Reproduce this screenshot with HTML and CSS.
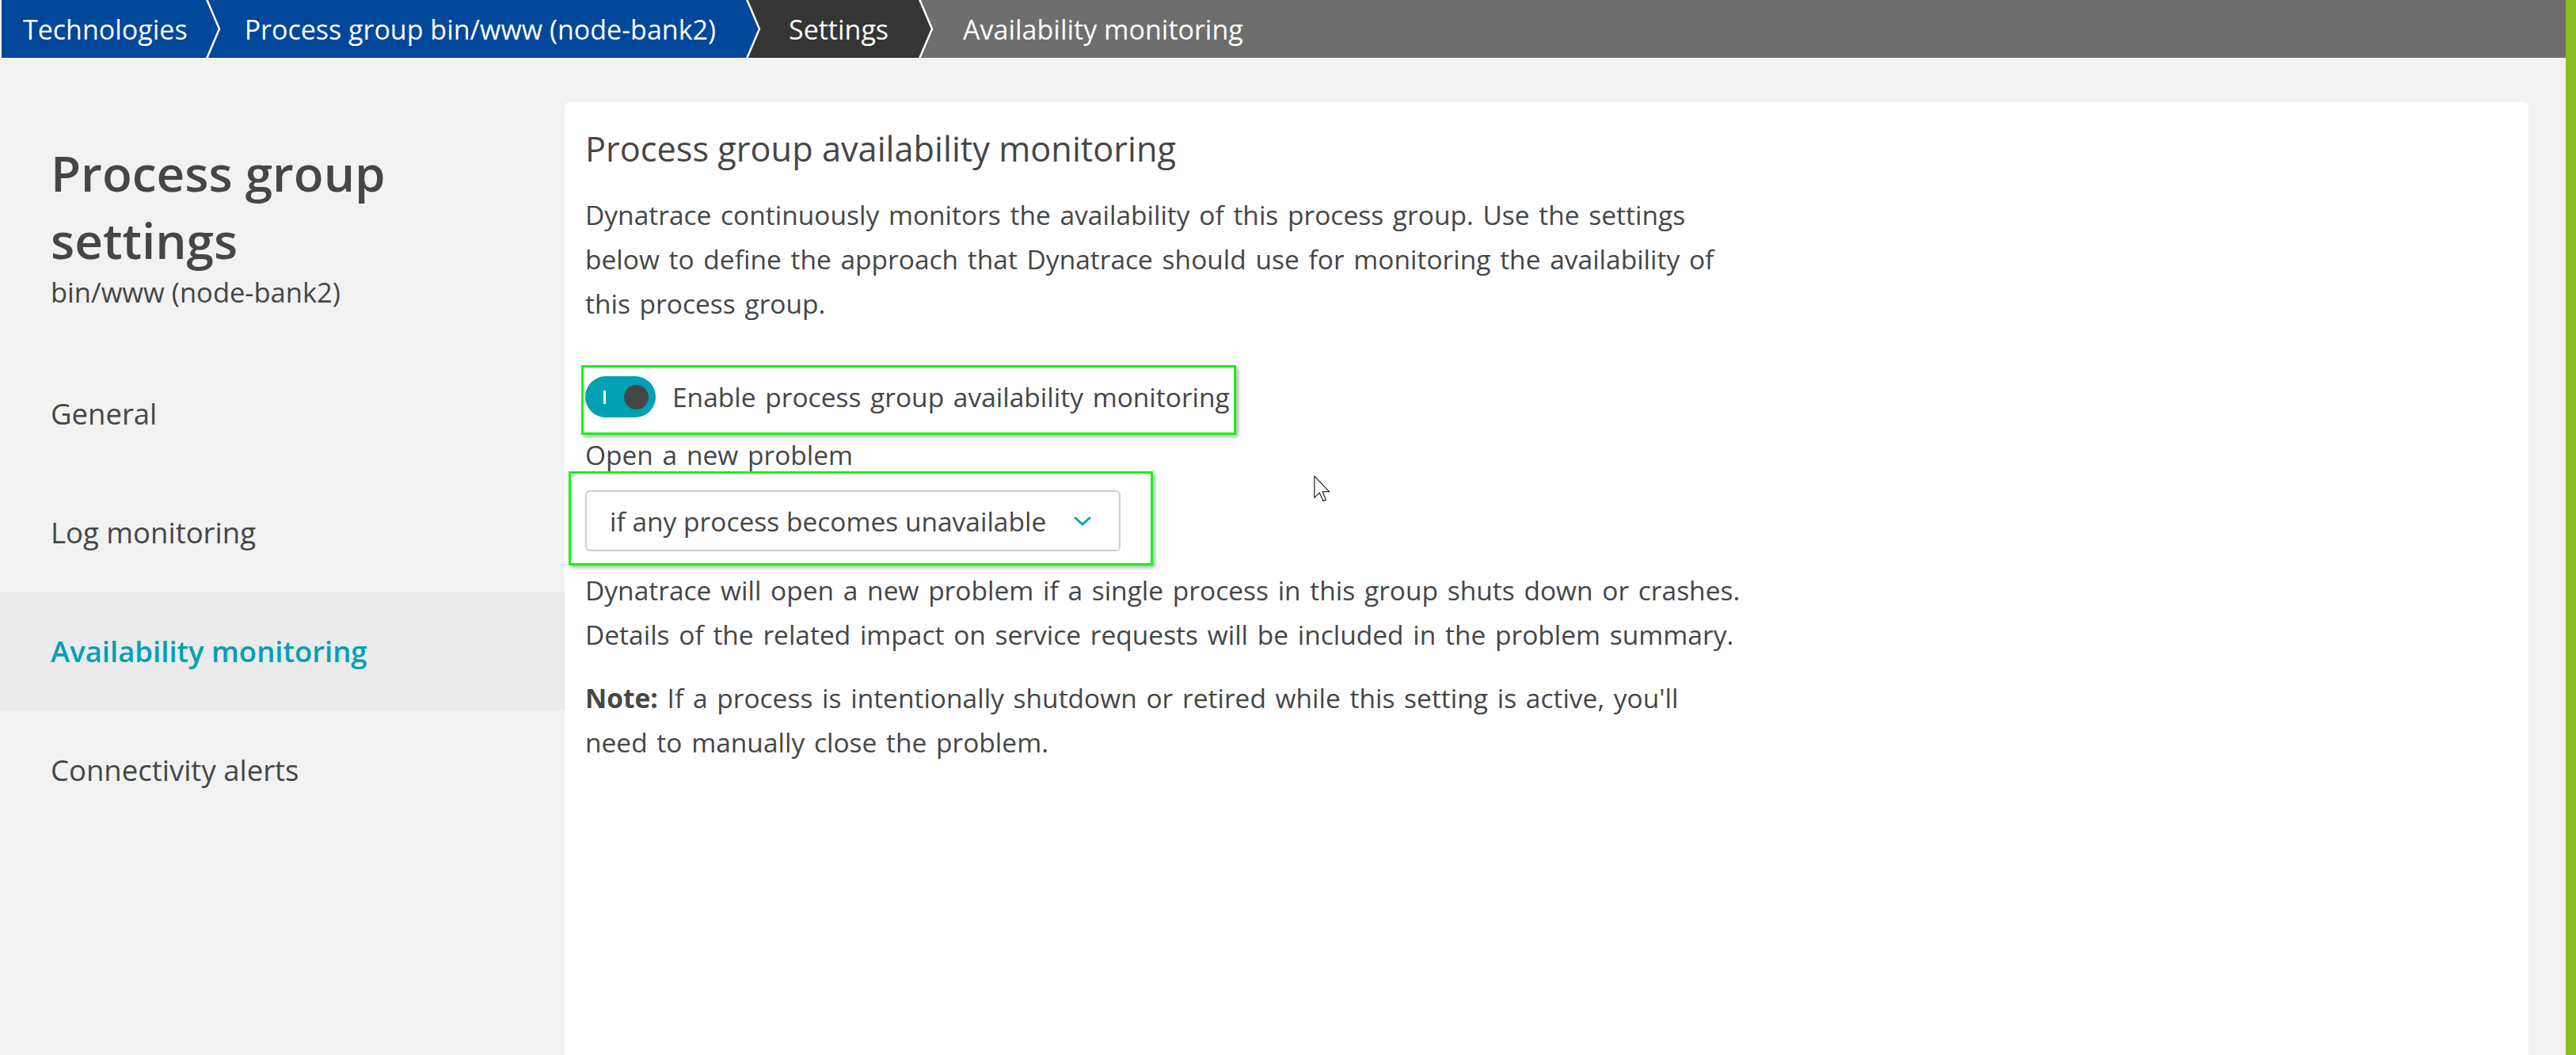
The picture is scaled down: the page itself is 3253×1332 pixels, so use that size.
FILE: index.html
```html
<!DOCTYPE html>
<html lang="en">
<head>
<meta charset="utf-8">
<title>Availability monitoring</title>
<link rel="stylesheet" href="styles.css">
</head>
<body>
<div class="app">
  <div class="main-col">
    <nav class="crumbs">
      <span class="crumb crumb-blue first">Technologies</span>
      <svg class="sep" viewBox="0 0 20 73" preserveAspectRatio="none"><rect x="0" y="0" width="20" height="73" fill="#01489a"/><polyline points="1,-1 17,36.5 1,74" fill="none" stroke="#fff" stroke-width="2.5"/></svg>
      <span class="crumb crumb-blue second">Process group bin/www (node-bank2)</span>
      <svg class="sep" viewBox="0 0 20 73" preserveAspectRatio="none"><rect x="0" y="0" width="20" height="73" fill="#353535"/><polygon points="0,0 1,0 17,36.5 1,73 0,73" fill="#01489a"/><polyline points="1,-1 17,36.5 1,74" fill="none" stroke="#fff" stroke-width="2.5"/></svg>
      <span class="crumb crumb-dark">Settings</span>
      <svg class="sep" viewBox="0 0 20 73" preserveAspectRatio="none"><rect x="0" y="0" width="20" height="73" fill="#6e6e6e"/><polygon points="0,0 1,0 17,36.5 1,73 0,73" fill="#353535"/><polyline points="1,-1 17,36.5 1,74" fill="none" stroke="#fff" stroke-width="2.5"/></svg>
      <span class="crumb crumb-grey last">Availability monitoring</span>
    </nav>
    <div class="body-row">
      <aside class="sidebar">
        <h1 class="side-title">Process group settings</h1>
        <div class="side-sub">bin/www (node-bank2)</div>
        <ul class="side-nav">
          <li class="nav-item">General</li>
          <li class="nav-item">Log monitoring</li>
          <li class="nav-item active">Availability monitoring</li>
          <li class="nav-item">Connectivity alerts</li>
        </ul>
      </aside>
      <div class="content">
        <section class="card">
          <h2 class="card-title">Process group availability monitoring</h2>
          <p class="intro">Dynatrace continuously monitors the availability of this process group. Use the settings<br>below to define the approach that Dynatrace should use for monitoring the availability of<br>this process group.</p>
          <div class="hl hl-toggle">
            <span class="toggle"><span class="toggle-mark"></span><span class="toggle-knob"></span></span>
            <span class="toggle-label">Enable process group availability monitoring</span>
          </div>
          <div class="field-label">Open a new problem</div>
          <div class="hl hl-select">
            <div class="select">
              <span>if any process becomes unavailable</span>
              <svg class="chev" viewBox="0 0 22 12"><polyline points="2,2 11,10 20,2" fill="none" stroke="#00a1b2" stroke-width="3" stroke-linecap="round" stroke-linejoin="round"/></svg>
            </div>
          </div>
          <p class="p2">Dynatrace will open a new problem if a single process in this group shuts down or crashes.<br>Details of the related impact on service requests will be included in the problem summary.</p>
          <p class="note"><b>Note:</b> If a process is intentionally shutdown or retired while this setting is active, you'll<br>need to manually close the problem.</p>
        </section>
      </div>
    </div>
  </div>
  <div class="green-strip"></div>
  <svg class="cursor" viewBox="0 0 12 19"><path d="M0.5,0.5 L0.5,16 L4.2,12.4 L6.8,18.4 L8.8,17.6 L6.3,11.6 L11.2,11.6 Z" fill="#fff" stroke="#000" stroke-width="0.6" stroke-linejoin="miter"/></svg>
</div>
</body>
</html>
```

FILE: styles.css
```css
html, body {
  margin: 0;
  padding: 0;
  height: 100%;
}
body {
  font-family: "Open Sans", "Liberation Sans", sans-serif;
  color: #454646;
  background: #f2f2f2;
  overflow: hidden;
}
.app {
  display: flex;
  height: 100vh;
  position: relative;
}
.main-col {
  flex: 1;
  display: flex;
  flex-direction: column;
  min-width: 0;
}
.green-strip {
  width: 13px;
  flex: none;
  background: #89bd24;
}

/* breadcrumb */
.crumbs {
  display: flex;
  height: 73px;
  margin-left: 2px;
  background: #6e6e6e;
  flex: none;
}
.crumb {
  display: flex;
  align-items: center;
  color: #fff;
  font-size: 34px;
  white-space: nowrap;
  padding: 0 38px 0 34px;
}
.crumb.first { padding: 0 23px 0 27px; }
.crumb.second { padding-left: 29px; }
.crumb-blue { background: #01489a; }
.crumb-dark { background: #353535; }
.crumb-grey { background: #6e6e6e; flex: 1; padding-left: 36px; }
.sep {
  width: 20px;
  height: 73px;
  flex: none;
  display: block;
}

/* layout */
.body-row {
  flex: 1;
  display: flex;
  min-height: 0;
}
.sidebar {
  width: 713px;
  flex: none;
  padding-top: 103px;
  box-sizing: border-box;
}
.side-title {
  margin: 0;
  padding: 0 64px;
  font-size: 62px;
  line-height: 85px;
  font-weight: 600;
  color: #454646;
}
.side-sub {
  padding: 0 64px;
  font-size: 34.5px;
  line-height: 46px;
  color: #454646;
}
.side-nav {
  list-style: none;
  margin: 55px 0 0;
  padding: 0;
}
.nav-item {
  height: 150px;
  display: flex;
  align-items: center;
  padding-left: 64px;
  font-size: 36.5px;
  color: #454646;
}
.nav-item.active {
  background: #ebebeb;
  color: #00a1b2;
  font-weight: 600;
  font-size: 36.5px;
}

.content {
  flex: 1;
  padding: 56px 47px 0 0;
  min-width: 0;
}
.card {
  background: #fff;
  border-radius: 6px 6px 0 0;
  height: 100%;
  box-sizing: border-box;
  padding: 31px 26px 0;
  font-size: 33.5px;
  word-spacing: 3px;
  line-height: 56px;
}
.card-title {
  margin: 0;
  font-size: 43.3px;
  word-spacing: 0;
  line-height: 56px;
  font-weight: 400;
  color: #454646;
}
.intro {
  margin: 27px 0 0;
  white-space: nowrap;
}

/* annotation boxes */
.hl {
  width: fit-content;
  border: 3px solid #14f514;
  box-shadow: 3px 3px 4px rgba(0, 0, 0, 0.28);
}
.hl-toggle {
  margin: 50px 0 0 -5px;
  padding: 9px 5px 17px 2px;
  display: flex;
  align-items: center;
  gap: 21px;
}
.toggle {
  width: 89px;
  height: 52px;
  border-radius: 26px;
  background: #00a1b2;
  display: flex;
  align-items: center;
  box-sizing: border-box;
  padding-left: 23px;
  flex: none;
}
.toggle-mark {
  width: 3px;
  height: 17px;
  background: #fff;
}
.toggle-knob {
  width: 31px;
  height: 31px;
  border-radius: 50%;
  background: #454646;
  margin-left: 23px;
}
.toggle-label {
  white-space: nowrap;
}
.field-label {
  margin-top: 4px;
  line-height: 42px;
}
.hl-select {
  margin-left: -21px;
  padding: 21px 38px 15px 18px;
}
.select {
  width: 676px;
  height: 77px;
  box-sizing: border-box;
  border: 2px solid #cfcfcf;
  border-radius: 6px;
  display: flex;
  align-items: center;
  justify-content: space-between;
  padding: 0 35px 0 29px;
  white-space: nowrap;
  word-spacing: 0;
}
.chev {
  width: 22px;
  height: 12px;
  display: block;
}
.p2 {
  margin: 0;
  padding-top: 3px;
  white-space: nowrap;
}
.note {
  margin: 24px 0 0;
  white-space: nowrap;
}
.note b {
  font-weight: 700;
}

.cursor {
  position: absolute;
  left: 1659px;
  top: 600px;
  width: 21px;
  height: 34px;
}
```
